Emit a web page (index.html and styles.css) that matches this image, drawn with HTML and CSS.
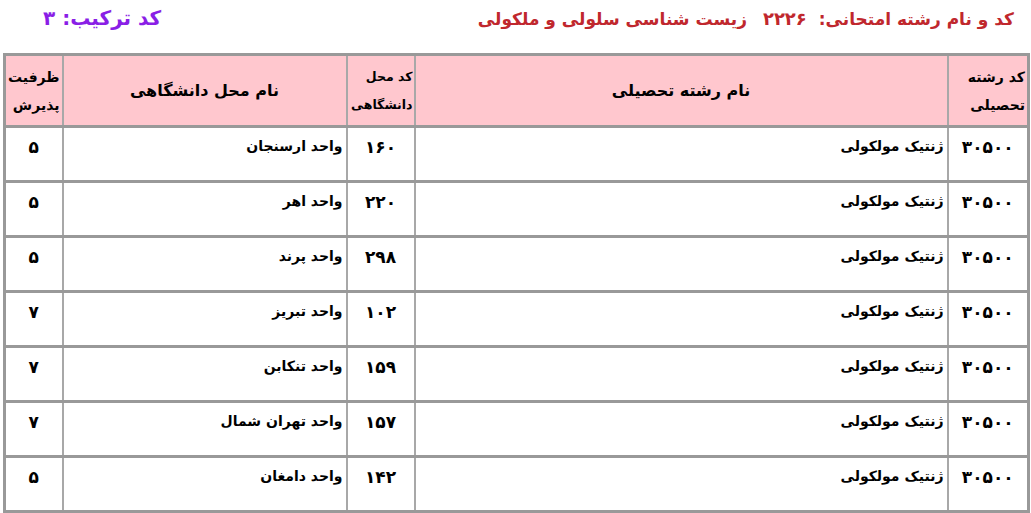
FILE: index.html
```html
<!DOCTYPE html>
<html lang="fa" dir="rtl">
<head>
<meta charset="utf-8">
<link rel="stylesheet" href="styles.css">
</head>
<body>
<div class="top">
  <div class="title">کد و نام رشته امتحانی: <span class="num">۲۲۲۶</span> زیست شناسی سلولی و ملکولی</div>
  <div class="combo">کد ترکیب: ۳</div>
</div>
<table class="grid">
  <colgroup>
    <col class="c1"><col class="c2"><col class="c3"><col class="c4"><col class="c5">
  </colgroup>
  <thead>
    <tr>
      <th class="hr">کد رشته<br>تحصیلی</th>
      <th>نام رشته تحصیلی</th>
      <th class="hr sm">کد محل<br>دانشگاهی</th>
      <th>نام محل دانشگاهی</th>
      <th class="hr">ظرفیت<br>پذیرش</th>
    </tr>
  </thead>
  <tbody>
    <tr><td class="n">۳۰۵۰۰</td><td class="t">ژنتیک مولکولی</td><td class="n">۱۶۰</td><td class="t">واحد ارسنجان</td><td class="n">۵</td></tr>
    <tr><td class="n">۳۰۵۰۰</td><td class="t">ژنتیک مولکولی</td><td class="n">۲۲۰</td><td class="t">واحد اهر</td><td class="n">۵</td></tr>
    <tr><td class="n">۳۰۵۰۰</td><td class="t">ژنتیک مولکولی</td><td class="n">۲۹۸</td><td class="t">واحد پرند</td><td class="n">۵</td></tr>
    <tr><td class="n">۳۰۵۰۰</td><td class="t">ژنتیک مولکولی</td><td class="n">۱۰۲</td><td class="t">واحد تبریز</td><td class="n">۷</td></tr>
    <tr><td class="n">۳۰۵۰۰</td><td class="t">ژنتیک مولکولی</td><td class="n">۱۵۹</td><td class="t">واحد تنکابن</td><td class="n">۷</td></tr>
    <tr><td class="n">۳۰۵۰۰</td><td class="t">ژنتیک مولکولی</td><td class="n">۱۵۷</td><td class="t">واحد تهران شمال</td><td class="n">۷</td></tr>
    <tr><td class="n">۳۰۵۰۰</td><td class="t">ژنتیک مولکولی</td><td class="n">۱۴۲</td><td class="t">واحد دامغان</td><td class="n">۵</td></tr>
  </tbody>
</table>
</body>
</html>
```

FILE: styles.css
```css
html, body {
  margin: 0;
  padding: 0;
  background: #ffffff;
}
body {
  font-family: "DejaVu Sans", "Noto Sans", sans-serif;
  color: #000;
  padding: 0 1px 0 3px;
}
.top {
  display: flex;
  justify-content: space-between;
  align-items: center;
  height: 36px;
  padding: 0 16px 0 40px;
  margin-bottom: 17px;
  font-weight: bold;
}
.title {
  color: #c0272d;
  font-size: 17px;
}
.title .num {
  margin: 0 6px 0 10px;
  font-size: 18px;
}
.combo {
  color: #8a1ee6;
  font-size: 20px;
}
.grid {
  width: 1027px;
  table-layout: fixed;
  border-collapse: collapse;
  border: 3px solid #999999;
}
.c1 { width: 81px; }
.c2 { width: 533px; }
.c3 { width: 68px; }
.c4 { width: 284px; }
.c5 { width: 58px; }
th {
  background: #ffc7ce;
  height: 69px;
  font-size: 16px;
  font-weight: bold;
  text-align: center;
  border-left: 2px solid #a8a8a8;
  border-right: 2px solid #a8a8a8;
  border-bottom: 3px solid #999999;
  padding: 0 3px;
  line-height: 28px;
}
th.hr {
  text-align: right;
  font-size: 14px;
  padding: 0 2px;
  white-space: nowrap;
}
th.sm {
  font-size: 12.5px;
  padding: 0 1px;
}
td {
  height: 42px;
  vertical-align: top;
  border-left: 2px solid #a8a8a8;
  border-right: 2px solid #a8a8a8;
  border-bottom: 3px solid #999999;
  font-weight: bold;
  padding: 10px 3px 0 3px;
}
td.n {
  text-align: center;
  font-size: 17px;
  line-height: 18px;
}
td.t {
  text-align: right;
  font-size: 14px;
}
```
